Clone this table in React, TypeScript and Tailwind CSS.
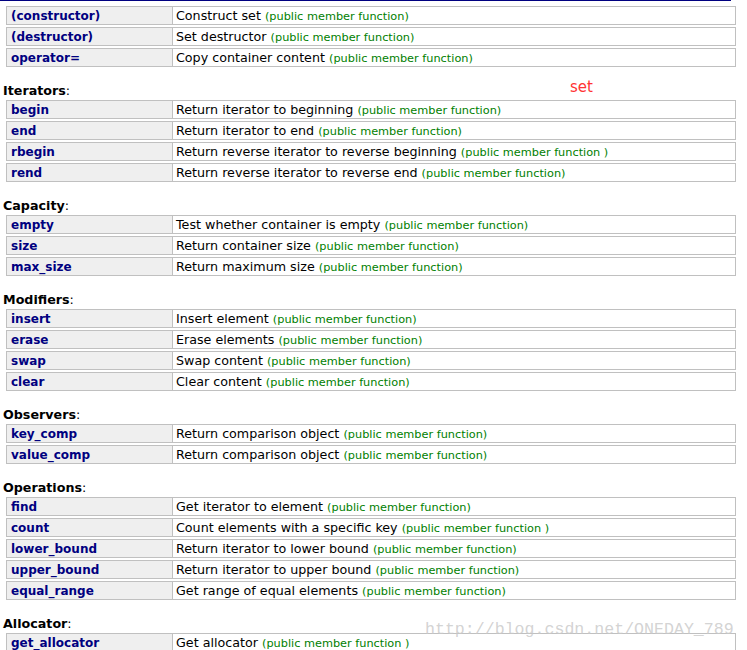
const sections: { title?: string; rows: [string, string, string?][] }[] = [
  {
    rows: [
      ["(constructor)", "Construct set"],
      ["(destructor)", "Set destructor"],
      ["operator=", "Copy container content"],
    ],
  },
  {
    title: "Iterators",
    rows: [
      ["begin", "Return iterator to beginning"],
      ["end", "Return iterator to end"],
      ["rbegin", "Return reverse iterator to reverse beginning", "(public member function )"],
      ["rend", "Return reverse iterator to reverse end"],
    ],
  },
  {
    title: "Capacity",
    rows: [
      ["empty", "Test whether container is empty"],
      ["size", "Return container size"],
      ["max_size", "Return maximum size"],
    ],
  },
  {
    title: "Modifiers",
    rows: [
      ["insert", "Insert element"],
      ["erase", "Erase elements"],
      ["swap", "Swap content"],
      ["clear", "Clear content"],
    ],
  },
  {
    title: "Observers",
    rows: [
      ["key_comp", "Return comparison object"],
      ["value_comp", "Return comparison object"],
    ],
  },
  {
    title: "Operations",
    rows: [
      ["find", "Get iterator to element"],
      ["count", "Count elements with a specific key", "(public member function )"],
      ["lower_bound", "Return iterator to lower bound"],
      ["upper_bound", "Return iterator to upper bound"],
      ["equal_range", "Get range of equal elements"],
    ],
  },
  {
    title: "Allocator",
    rows: [["get_allocator", "Get allocator", "(public member function )"]],
  },
];

export default function App() {
  return (
    <div className="relative w-[747px] h-[650px] overflow-hidden bg-white font-['DejaVu_Sans',sans-serif] text-black">
      <div className="h-px w-[731px] bg-[#000080]" />

      <div className="pl-[6px] pr-[11px] pt-[5px]">
        {sections.map((sec, si) => (
          <div key={si}>
            {sec.title && (
              <div className="relative mt-[15px] h-[18px] text-[12.7px] leading-[18px] -ml-[3px]">
                <b>{sec.title}</b>:
                {sec.title === "Iterators" && (
                  <span className="absolute left-[567px] top-[-4px] text-[15px] font-normal text-[#ff3333]">
                    set
                  </span>
                )}
              </div>
            )}
            <div className="flex flex-col gap-[2px]">
              {sec.rows.map(([name, desc, note]) => (
                <div
                  key={name}
                  className="flex h-[19px] border border-[#c0c0c0] text-[12.7px] leading-[17px] overflow-hidden"
                >
                  <div className="w-[166px] shrink-0 border-r border-[#c0c0c0] bg-[#efefef] pl-[4px] pt-px text-[12px] font-bold text-[#000080]">
                    {name}
                  </div>
                  <div className="pl-[3px] whitespace-nowrap">
                    {desc}{" "}
                    <span className="text-[11.3px] text-[#008000]">
                      {note ?? "(public member function)"}
                    </span>
                  </div>
                </div>
              ))}
            </div>
          </div>
        ))}
      </div>

      <div className="absolute left-[425px] top-[618px] font-['Liberation_Mono',monospace] text-[16.6px] text-[#c8c8c8]/80">
        http://blog.csdn.net/ONEDAY_789
      </div>
    </div>
  );
}
